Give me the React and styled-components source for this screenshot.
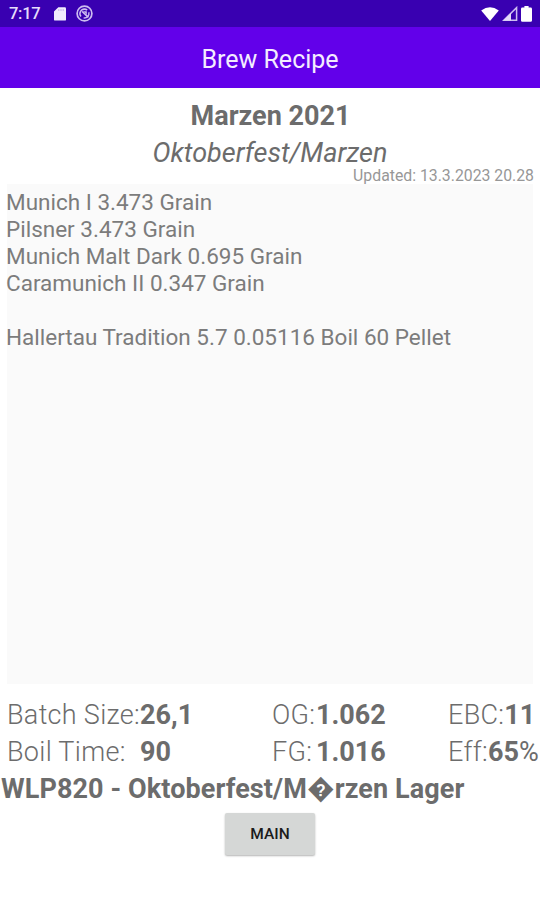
import React from "react";
import styled, {createGlobalStyle} from 'styled-components';

const GlobalStyle = createGlobalStyle`
    * {
        box-sizing: border-box;
    }
    body {
        margin: 0;
        background-color: #ffffff;
        font-family: Roboto, "DejaVu Sans", sans-serif;
        color: #6c6c6c;
    }
`;

const Screen = styled.div`
    display: flex;
    flex-direction: column;
    width: 540px;
    height: 900px;
    overflow: hidden;
    background-color: #ffffff;
`;

const StatusBar = styled.div`
    display: flex;
    align-items: center;
    justify-content: space-between;
    height: 27px;
    padding: 0 8px 0 9px;
    background-color: #3900b1;
`;

const StatusGroup = styled.div`
    display: flex;
    align-items: center;
    gap: ${({$gap}) => $gap}px;
`;

const Clock = styled.span`
    width: 33px;
    margin-right: 2px;
    color: #e6dcfb;
    font-size: 16.5px;
    font-weight: 500;
    line-height: 28px;
    letter-spacing: -0.3px;
`;

const AppBar = styled.header`
    display: flex;
    justify-content: center;
    height: 61px;
    background-color: #6200ea;
`;

const AppTitle = styled.h1`
    margin: 0;
    color: #f4ecff;
    font-size: 25px;
    font-weight: 400;
    line-height: 66px;
`;

const RecipeHeader = styled.div`
    display: flex;
    flex-direction: column;
    align-items: center;
    height: 96px;
    padding-top: 9px;
`;

const RecipeName = styled.h2`
    margin: 0;
    padding-left: 1px;
    font-size: 27px;
    font-weight: 700;
    line-height: 38px;
`;

const RecipeStyle = styled.p`
    margin: 0;
    font-size: 27px;
    font-style: italic;
    line-height: 37px;
`;

const Updated = styled.p`
    align-self: flex-end;
    margin: -6px 6px 0 0;
    color: #979797;
    font-size: 15.8px;
    line-height: 20px;
`;

const IngredientList = styled.ul`
    height: 500px;
    margin: 0 7px;
    padding: 5px 0 0;
    list-style: none;
    background-color: #fafafa;
`;

const Ingredient = styled.li`
    height: 27px;
    margin-left: -1px;
    color: #7c7c7c;
    font-size: 22.5px;
    line-height: 27px;
    white-space: nowrap;
`;

const Stats = styled.div`
    display: grid;
    grid-template-columns: 133px 132px 44px 132px 1fr;
    grid-auto-rows: 37px;
    height: 74px;
    margin-top: 12px;
    padding-left: 7px;
    font-size: 27px;
    line-height: 38px;
    white-space: nowrap;
`;

const StatLabel = styled.span`
    font-weight: 300;
    letter-spacing: 0.3px;
`;

const StatValue = styled.span`
    font-weight: 700;
`;

const StatUnit = styled.span`
    font-weight: 400;
`;

const Yeast = styled.p`
    height: 37px;
    margin: 0;
    padding-left: 1px;
    font-size: 27px;
    font-weight: 700;
    line-height: 39px;
    letter-spacing: 0.1px;
    white-space: nowrap;
`;

const MainButton = styled.button`
    align-self: center;
    width: 90px;
    height: 42px;
    margin-top: 6px;
    padding: 0;
    border: none;
    border-radius: 2px;
    background-color: #d5d7d6;
    box-shadow: 0 1px 2px rgba(0, 0, 0, 0.3);
    color: #1b1b1b;
    font-family: Roboto, sans-serif;
    font-size: 15.5px;
    font-weight: 500;
    line-height: 41px;
`;

const SdCardIcon = () => (
    <svg width="12" height="14" viewBox="0 0 12 14">
        <path d="M4.3 0.2H10.8Q12 0.2 12 1.4V12.4Q12 13.6 10.8 13.6H1.2Q0 13.6 0 12.4V4.5Z" fill="#f1eafd"/>
        <path d="M4.8 2V4M7 2V4M9.2 2V4" stroke="#b9a2e4" strokeWidth="0.8"/>
    </svg>
);

const SyncIcon = () => (
    <svg width="17" height="17" viewBox="0 0 17 17" fill="none" stroke="#cdbcf0">
        <circle cx="8.5" cy="8.5" r="7.4" strokeWidth="1.7"/>
        <path d="M5 11.6A4.6 4.6 0 0 1 5.8 4.9Q8.5 3.4 11.2 5" strokeWidth="1.6"/>
        <path d="M12.8 7.2A4.6 4.6 0 0 1 7.6 12.9" strokeWidth="1.4"/>
        <path d="M6.2 6.4L12.4 12.4" strokeWidth="1.8"/>
        <path d="M7.6 6.2H10.8V9.4Z" fill="#cdbcf0" stroke="none"/>
    </svg>
);

const WifiIcon = () => (
    <svg width="18" height="14" viewBox="0 0 18 14">
        <path d="M0.2 3.6Q9 -3 17.8 3.6L9 14Z" fill="#ffffff"/>
    </svg>
);

const SignalIcon = () => (
    <svg width="16" height="15" viewBox="0 0 16 15">
        <path d="M14.6 1.6V14.2H1.8Z" fill="none" stroke="#cdbdf0" strokeWidth="1.5"/>
        <path d="M9 7V14.4H1.2Z" fill="#e4daf9"/>
    </svg>
);

const BatteryIcon = () => (
    <svg width="11" height="16" viewBox="0 0 11 16">
        <path d="M3.4 0H7.6V1.6H9.6Q11 1.6 11 3V14.4Q11 15.8 9.6 15.8H1.4Q0 15.8 0 14.4V3Q0 1.6 1.4 1.6H3.4Z" fill="#ffffff"/>
    </svg>
);

const ingredients = [
    'Munich I 3.473 Grain',
    'Pilsner 3.473 Grain',
    'Munich Malt Dark 0.695 Grain',
    'Caramunich II 0.347 Grain',
    '',
    'Hallertau Tradition 5.7 0.05116 Boil 60 Pellet',
];

const App = () => {

    return (
        <>
            <GlobalStyle/>
            <Screen>
                <StatusBar>
                    <StatusGroup $gap={10}>
                        <Clock>7:17</Clock>
                        <SdCardIcon/>
                        <SyncIcon/>
                    </StatusGroup>
                    <StatusGroup $gap={3}>
                        <WifiIcon/>
                        <SignalIcon/>
                        <BatteryIcon/>
                    </StatusGroup>
                </StatusBar>
                <AppBar>
                    <AppTitle>Brew Recipe</AppTitle>
                </AppBar>
                <RecipeHeader>
                    <RecipeName>Marzen 2021</RecipeName>
                    <RecipeStyle>Oktoberfest/Marzen</RecipeStyle>
                    <Updated>Updated: 13.3.2023 20.28</Updated>
                </RecipeHeader>
                <IngredientList>
                    {ingredients.map((item, index) => (
                        <Ingredient key={index}>{item}</Ingredient>
                    ))}
                </IngredientList>
                <Stats>
                    <StatLabel>Batch Size:</StatLabel>
                    <StatValue>26,1</StatValue>
                    <StatLabel>OG:</StatLabel>
                    <StatValue>1.062</StatValue>
                    <span><StatLabel>EBC:</StatLabel><StatValue>11</StatValue></span>
                    <StatLabel>Boil Time:</StatLabel>
                    <StatValue>90</StatValue>
                    <StatLabel>FG:</StatLabel>
                    <StatValue>1.016</StatValue>
                    <span><StatLabel>Eff:</StatLabel><StatValue>65</StatValue><StatUnit>%</StatUnit></span>
                </Stats>
                <Yeast>WLP820 - Oktoberfest/M�rzen Lager</Yeast>
                <MainButton>MAIN</MainButton>
            </Screen>
        </>
    );
};

export default App;
